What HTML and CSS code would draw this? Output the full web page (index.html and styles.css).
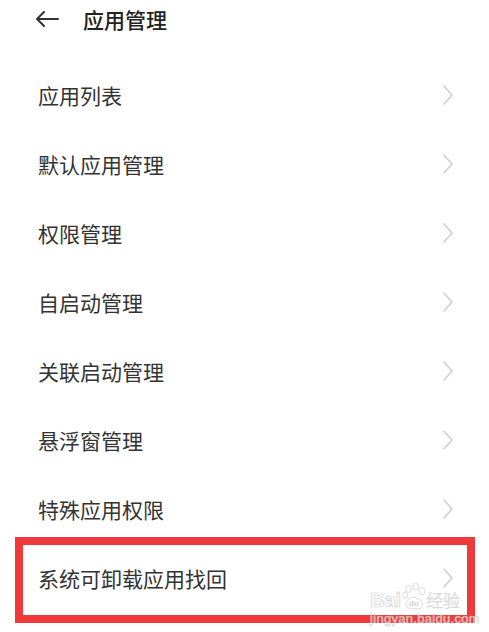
FILE: index.html
```html
<!DOCTYPE html>
<html lang="zh-CN">
  <head>
    <meta charset="UTF-8" />
    <title>应用管理</title>
    <link rel="stylesheet" href="styles.css">
  </head>
  <body>
    <div class="page">
      <div class="header">
        <svg class="back" width="24" height="16" viewBox="0 0 24 16">
          <path d="M9 1 L2 8 L9 15 M2 8 H23" fill="none" stroke="#333" stroke-width="2" stroke-linecap="round" stroke-linejoin="round" />
        </svg>
        <h1 class="title">应用管理</h1>
      </div>

      <ul class="menu">
        <li class="menu-item"><span>应用列表</span><svg class="chevron" width="12" height="22" viewBox="0 0 12 22"><polyline points="2,2 10,11 2,20" /></svg></li>
        <li class="menu-item"><span>默认应用管理</span><svg class="chevron" width="12" height="22" viewBox="0 0 12 22"><polyline points="2,2 10,11 2,20" /></svg></li>
        <li class="menu-item"><span>权限管理</span><svg class="chevron" width="12" height="22" viewBox="0 0 12 22"><polyline points="2,2 10,11 2,20" /></svg></li>
        <li class="menu-item"><span>自启动管理</span><svg class="chevron" width="12" height="22" viewBox="0 0 12 22"><polyline points="2,2 10,11 2,20" /></svg></li>
        <li class="menu-item"><span>关联启动管理</span><svg class="chevron" width="12" height="22" viewBox="0 0 12 22"><polyline points="2,2 10,11 2,20" /></svg></li>
        <li class="menu-item"><span>悬浮窗管理</span><svg class="chevron" width="12" height="22" viewBox="0 0 12 22"><polyline points="2,2 10,11 2,20" /></svg></li>
        <li class="menu-item"><span>特殊应用权限</span><svg class="chevron" width="12" height="22" viewBox="0 0 12 22"><polyline points="2,2 10,11 2,20" /></svg></li>
        <li class="menu-item"><span>系统可卸载应用找回</span><svg class="chevron" width="12" height="22" viewBox="0 0 12 22"><polyline points="2,2 10,11 2,20" /></svg></li>
      </ul>

      <!-- annotation box around the last item -->
      <div class="highlight"></div>

      <div class="watermark">
        <div class="wm-logo">
          <span class="wm-bai">Bai</span>
          <svg class="wm-paw" width="30" height="34" viewBox="0 0 30 34">
            <g fill="#fff" stroke="#c8c8c8" stroke-width="1">
              <ellipse cx="8" cy="8" rx="3.5" ry="4.5" />
              <ellipse cx="17" cy="5" rx="3.5" ry="4.5" />
              <ellipse cx="25" cy="11" rx="3.5" ry="4.5" />
              <ellipse cx="4" cy="16" rx="3" ry="4" />
              <path d="M5 30 C3 22 12 17 16 19 C22 20 28 25 25 31 C22 34 9 34 5 30 Z" />
            </g>
            <text x="15" y="30" text-anchor="middle" font-size="10" font-family="Liberation Sans, sans-serif" font-weight="bold" fill="#c8c8c8" stroke="none">du</text>
          </svg>
          <span class="wm-jy">经验</span>
        </div>
        <div class="wm-url">jingyan.baidu.com</div>
      </div>
    </div>
  </body>
</html>
```

FILE: styles.css
```css
body {
  margin: 0;
  padding: 0;
  background-color: #ffffff;
  font-family: "Noto Sans CJK SC", "Noto Sans", sans-serif;
  color: #333333;
}
.page {
  position: relative;
  width: 489px;
  height: 632px;
  overflow: hidden;
}
.header {
  display: flex;
  align-items: center;
  height: 38px;
  padding-left: 35px;
}
.back {
  display: block;
}
.title {
  margin: 0 0 0 24px;
  font-size: 21px;
  font-weight: 500;
  color: #222222;
  line-height: 38px;
}
.menu {
  list-style: none;
  margin: 22px 0 0 0;
  padding: 0;
}
.menu-item {
  display: flex;
  align-items: center;
  justify-content: space-between;
  height: 69px;
  padding: 0 35px 0 38px;
  font-size: 21px;
  color: #333333;
}
.chevron polyline {
  fill: none;
  stroke: #cfcfcf;
  stroke-width: 1.6;
  stroke-linecap: round;
  stroke-linejoin: round;
}
.highlight {
  position: absolute;
  left: 15px;
  top: 537px;
  width: 444px;
  height: 70px;
  border: 8px solid #f03a3a;
}
.watermark {
  position: absolute;
  left: 370px;
  top: 584px;
  width: 100px;
  opacity: 0.8;
}
.wm-logo {
  display: flex;
  align-items: flex-end;
  height: 26px;
}
.wm-bai {
  font-family: "Liberation Sans", sans-serif;
  font-size: 20px;
  font-weight: bold;
  line-height: 20px;
  color: #ffffff;
  -webkit-text-stroke: 0.7px #c8c8c8;
}
.wm-paw {
  margin: -10px 0 0 1px;
  width: 24px;
  height: 28px;
}
.wm-jy {
  font-size: 17px;
  font-weight: 300;
  line-height: 20px;
  color: #ffffff;
  -webkit-text-stroke: 0.5px #c8c8c8;
}
.wm-url {
  margin-top: 2px;
  font-family: "Liberation Sans", sans-serif;
  font-size: 13px;
  line-height: 14px;
  letter-spacing: 0.3px;
  color: #ffffff;
  -webkit-text-stroke: 0.6px #c8c8c8;
}
```
